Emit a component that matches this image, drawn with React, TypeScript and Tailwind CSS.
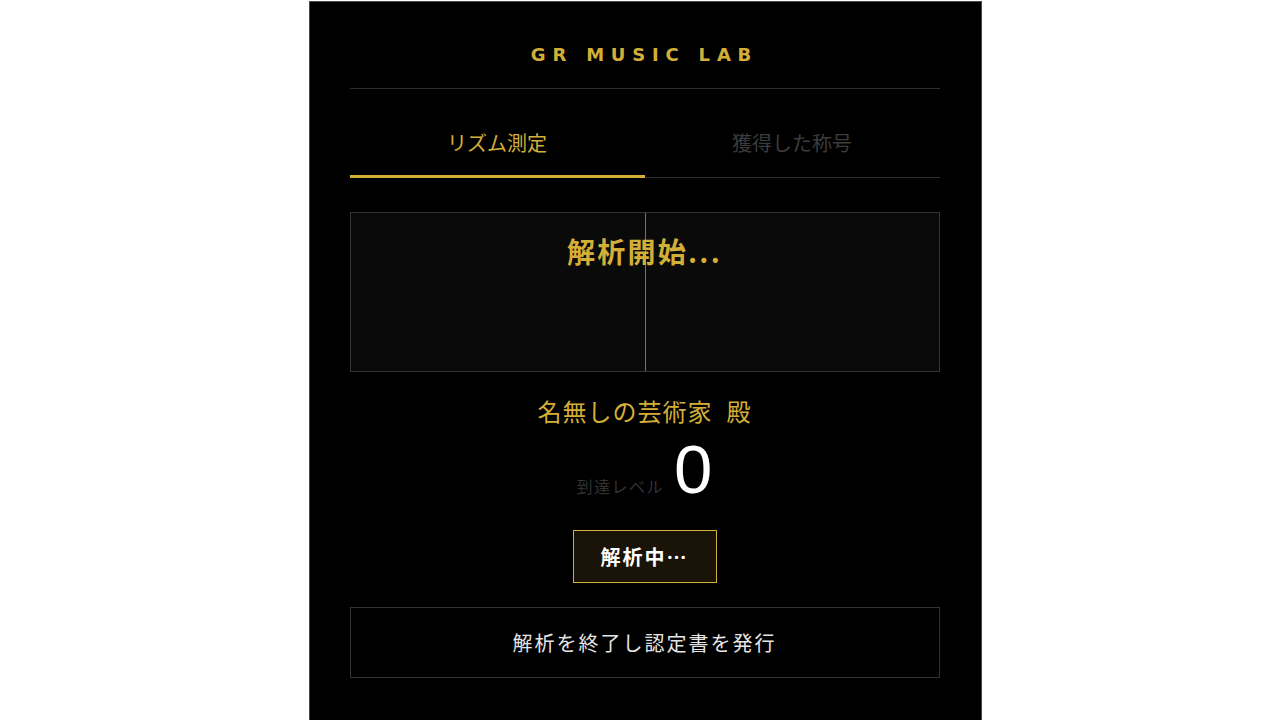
export default function App() {
  const jp = "font-['Noto_Sans_CJK_JP','Noto_Sans',sans-serif]"
  return (
    <div className="min-h-screen bg-white flex justify-center pl-[10px]">
      <div className={`w-[673px] min-h-[720px] bg-black border border-[#4a4a4a] border-b-0 mt-px pl-10 pr-[41px] ${jp}`}>
        <h1 className="pt-[40px] pb-[20px] text-center text-[18px] font-bold tracking-[6.8px] text-[#d4af37] font-['DejaVu_Sans',sans-serif] leading-[26px] border-b border-[#2e2e2e]">
          GR MUSIC LAB
        </h1>

        {/* tabs */}
        <div className="flex mt-[40px]">
          <div className="flex-1 text-center text-[20px] text-[#d4af37] pb-[18px] border-b-[3px] border-[#d4af37] leading-[28px]">
            リズム測定
          </div>
          <div className="flex-1 text-center text-[20px] text-[#3c3c3c] pb-[20px] border-b border-[#2e2e2e] leading-[28px]">
            獲得した称号
          </div>
        </div>

        {/* visualizer */}
        <div className="relative mt-[34px] h-[160px] bg-[#0a0a0a] border border-[#333]">
          <div className="absolute left-1/2 top-0 bottom-0 w-px bg-[#8b7536]" />
          <div className="relative pt-[18px] text-center text-[28px] tracking-[0.08em] font-bold text-[#d4af37] leading-[40px]">
            解析開始...
          </div>
        </div>

        <div className="mt-[23px] text-center text-[24px] tracking-[1px] text-[#d4af37] leading-[32px]">
          名無しの芸術家<span className="ml-[14px]">殿</span>
        </div>

        <div className="flex items-baseline justify-center gap-[10px] mt-[13px] h-[60px]">
          <span className="text-[16px] tracking-[1.5px] text-[#333]">到達レベル</span>
          <span className="text-[69px] leading-[60px] text-white font-['Liberation_Sans',sans-serif]">0</span>
        </div>

        <div className="flex justify-center mt-[30px]">
          <button className="w-[144px] h-[53px] border border-[#d4af37] bg-[#1a1408] text-white text-[20px] tracking-[0.1em] font-bold">
            解析中…
          </button>
        </div>

        <button className="mt-[24px] w-full h-[71px] border border-[#333] bg-black text-[#e5e5e5] text-[20px] tracking-[0.1em]">
          解析を終了し認定書を発行
        </button>
      </div>
    </div>
  )
}
